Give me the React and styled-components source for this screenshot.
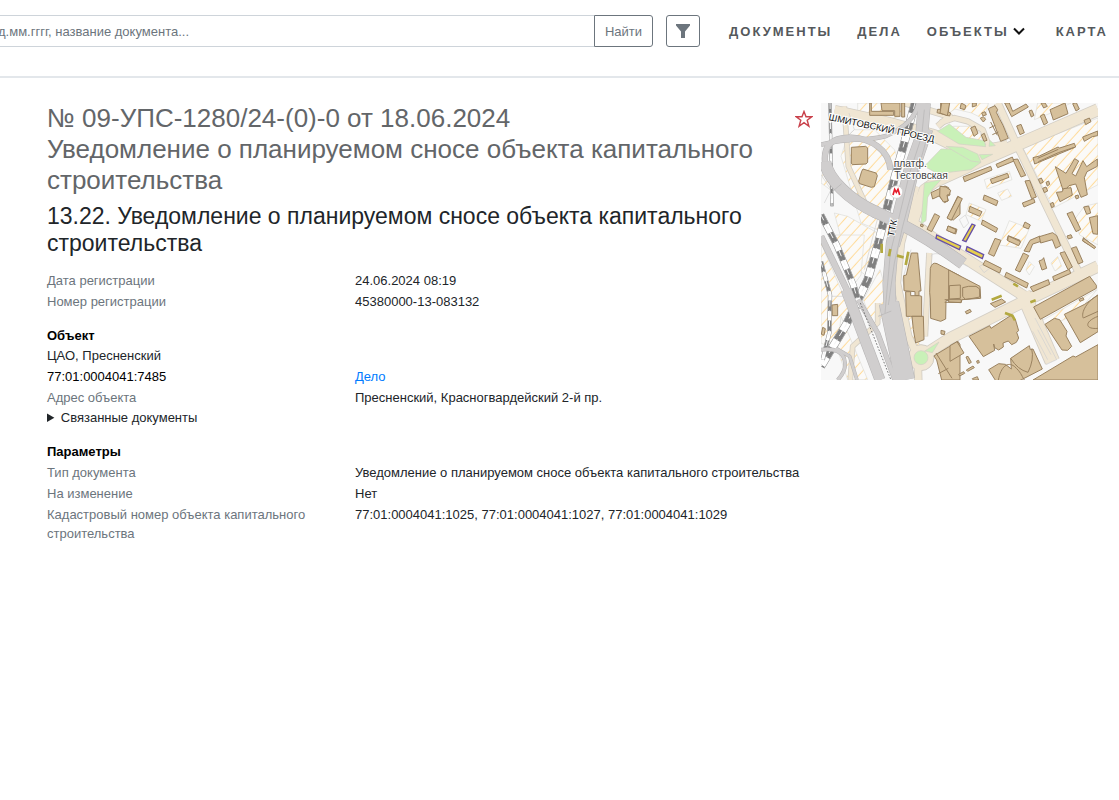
import { useState } from 'react';

import styled, { createGlobalStyle, css } from 'styled-components';

const GlobalStyle = createGlobalStyle`
  * {
    box-sizing: border-box;
  }

  body {
    margin: 0;
    background-color: #fff;
    color: #212529;
    font-family: "Liberation Sans", Arial, sans-serif;
    font-size: 13px;
    line-height: 19px;
    overflow-x: hidden;
  }
`;

const HeaderStyled = styled.header`
  display: flex;
  align-items: flex-start;
  padding: 15px 11px 29px 0;
  border-bottom: 2px solid #e3e7eb;
`;

const SearchForm = styled.form`
  display: flex;
  flex: 1;
  margin-left: -12px;
`;

const SearchInput = styled.input`
  flex: 1;
  min-width: 0;
  height: 32px;
  padding: 0 9px;
  border: 1px solid #ced4da;
  border-right: none;
  border-radius: 3px 0 0 3px;
  font: inherit;
  color: #495057;

  &::placeholder {
    color: #6c757d;
    opacity: 1;
  }
`;

const Button = styled.button`
  display: flex;
  align-items: center;
  justify-content: center;
  height: 32px;
  padding: 0 10px;
  border: 1px solid #6c757d;
  border-radius: 3px;
  background-color: transparent;
  color: #6c757d;
  font: inherit;
  cursor: pointer;
`;

const SearchBtn = styled(Button)`
  border-radius: 0 3px 3px 0;
`;

const FilterBtn = styled(Button)`
  width: 34px;
  margin-left: 13px;
  padding: 0;
`;

const Nav = styled.nav`
  display: flex;
  align-items: center;
  gap: 25px;
  height: 32px;
  margin-left: 29px;
`;

const navItem = css`
  color: #55595c;
  font-size: 13px;
  font-weight: 700;
  letter-spacing: 2px;
  text-transform: uppercase;
`;

const NavLink = styled.a`
  ${navItem}
  text-decoration: none;
`;

const NavDropdown = styled.button`
  ${navItem}
  display: flex;
  align-items: center;
  gap: 4px;
  margin-right: 6px;
  padding: 0;
  border: none;
  background: none;
  font-family: inherit;
  cursor: pointer;
`;

const Main = styled.main`
  display: flex;
  align-items: flex-start;
  gap: 8px;
  padding: 25px 21px 24px 47px;
`;

const Content = styled.article`
  flex: 1;
  min-width: 0;
`;

const Heading = styled.div`
  display: flex;
  align-items: flex-start;
  justify-content: space-between;
  gap: 24px;
`;

const Title = styled.h1`
  margin: 0 0 7px;
  color: #636669;
  font-size: 26px;
  font-weight: 400;
  line-height: 31px;
`;

const Subtitle = styled.h2`
  margin: 0 0 13px;
  padding-right: 42px;
  font-size: 23px;
  font-weight: 400;
  line-height: 27px;
`;

const StarBtn = styled.button`
  display: flex;
  margin-top: 7px;
  padding: 0;
  border: none;
  background: none;
  cursor: pointer;
`;

const Section = styled.section`
  margin-bottom: 13px;
`;

const SectionTitle = styled.h3`
  margin: 0;
  color: #000;
  font-size: 13px;
  font-weight: 700;
  line-height: 21px;
`;

const Line = styled.p`
  margin: 0;
  line-height: 20px;
`;

const List = styled.dl`
  margin: 0;
`;

const Row = styled.div`
  display: grid;
  grid-template-columns: 308px 1fr;
  padding: 1px 0;
`;

const Term = styled.dt`
  padding-right: 30px;
  color: ${({ $dark }) => $dark ? '#000' : '#6c757d'};
`;

const Value = styled.dd`
  margin: 0;
`;

const CaseLink = styled.a`
  color: #007bff;
  text-decoration: none;
`;

const Related = styled.details`
  line-height: 20px;

  summary {
    cursor: pointer;
  }
`;

const MapStyled = styled.svg`
  display: block;
  flex: none;
  width: 277px;
  height: 277px;
`;

const FunnelIcon = () => (
  <svg width="16" height="16" viewBox="0 0 16 16" aria-hidden="true">
    <path d="M1 1h14v1.500L10 8.500V15H6V8.500L1 2.500z" fill="#6c757d" />
  </svg>
);

const ChevronIcon = () => (
  <svg width="12" height="12" viewBox="0 0 12 12" aria-hidden="true">
    <path d="M1 3.500l5 5 5-5" fill="none" stroke="#111" strokeWidth="2" />
  </svg>
);

const StarIcon = ({ filled }) => (
  <svg width="18" height="18" viewBox="0 0 18 18" aria-hidden="true">
    <path
      d="M9 1.500l2 5.300h5.700l-4.500 3.500 1.700 5.900L9 12.700l-4.900 3.500 1.700-5.900L1.300 6.800H7z"
      fill={filled ? '#c9414b' : 'none'}
      stroke="#c9414b"
      strokeWidth="1.400"
    />
  </svg>
);

const hatched = [
  'M110 0h140l-10 40-60 14-70-24z',
  'M100 80l60 0 60 60 20 50-70 190-50-20-60-200 20-60z',
  'M8 190l20 10v60l-28-20z',
  'M40 330l40 10 90 50-30 130-60-40z',
  'M0 420l60 140 40 60-80 110-20-10z',
  'M30 396h100l-10 120-30 40z',
  'M60 640l80 190h-60l-30-90z',
  'M177 500l30 100-20 40-30 30-30-80z',
  'M372 0h130l-10 50-40-20-50-12-30 20z',
  'M377 90l20-20 60 0 20 20 10 30-50-8z',
  'M605 133L831 45v200L697 315z',
  'M650 0h100l-60 30-50 20z',
  'M490 230l75-25 8 25-75 28z',
  'M445 300l50 20-15 35-45-20z',
  'M530 270l30-12 12 22-30 12z',
  'M565 353l60 23-25 60-65-10z',
  'M760 350l30-40 41-10v126l-55-30z',
  'M650 660l178-100-60 70-100 50z',
  'M260 640l20 0 20 110-25-20z',
  'M625 476l15 15-15 25-10-15z',
  'M690 480l20-20 12 30-20 14z',
];

const greens = [
  'M310 190l50-52 60 0 60 40-30 22-100 12z',
  'M310 240l50-10-25 28-15 25-5 70-15 10z',
  'M350 85l35-22 50 40 55 10 4 18-80-8z',
  'M375 130l50 3 45 20 10 25-30-4z',
  'M475 155l40-1-32 16z',
  'M507 112l16 16-19 2z',
  'M310 745l44-28-20 32-18-4z',
];

// [path, width], drawn first as a casing and then as a fill
const streets = [
  ['M40 25L200 60 330 95 480 145 560 130', 34],
  ['M831 20L587 126 490 168 350 232', 34],
  ['M530 0L587 126 600 150 772 506', 20],
  ['M357 60L400 45 440 55 485 80 500 120 520 135', 14],
  ['M340 96L400 108 460 145', 14],
  ['M340 110L380 130 440 170 465 195', 12],
  ['M350 232L310 260 295 300 275 360 330 400 620 586', 30],
  ['M606 570L694 775', 42],
  ['M831 490L620 590 387 706 300 762', 32],
  ['M325 450L312 700', 14],
  ['M285 250L240 420 228 540 262 700 290 760 292 831', 20],
  ['M70 10L82 190 130 295', 12],
  ['M250 0L385 40 350 70', 16],
  ['M170 600L170 660 95 730 88 831', 12],
];

const motorways = [
  ['M292 0C284 50 240 80 192 100 C140 116 100 100 0 125', 11],
  ['M208 200C205 140 150 106 90 104C30 102 8 130 12 176', 16],
  ['M12 176C20 225 80 290 170 330', 34],
  ['M160 325C240 360 330 410 426 482', 34],
  ['M310 0L302 100 270 190 235 330 214 420 204 540 208 640', 36],
  ['M326 80L285 200 250 350 226 430', 18],
  ['M204 600L252 831', 58],
  ['M0 400L80 566', 17],
  ['M75 560L177 831', 30],
  ['M112 590L170 690 222 831', 13],
  ['M0 740C40 735 70 745 72 780C74 800 65 815 50 831', 9],
  ['M45 736L86 760 108 831', 8],
];

const rails = [
  ['M282 0L258 90 222 220 172 420 140 530 75 666 0 790', 22],
  ['M27 0L33 310', 7],
  ['M0 336L47 426 97 546 117 616', 17],
  ['M0 476L27 576 25 690 5 770', 10],
];

// buildings of each quarter, in that quarter's own coordinates
const buildings = [
  {
    x: -123, y: -24,
    shapes: [
      'M214 157l43-3 6 5v43l-5 5-41 2-3-5z',
      'M249 222l39 12 4 8-9 33-9 2-35-11-3-7 9-30z',
      'M269 24h5v25h67v12h-72z',
      'M303 24h57v40h-16v-17h-38z',
      'M365 24h9v42h-9z',
      'M482 24h24v28l6 2-3 9-38-10 2-10h9z',
      'M453 293l42-20 11 5 4 22-9 4 4 13-11 6-17-20-19 9z',
      'M533 304l7 4v50l-20 17-18-6z',
      'M464 356l15 8-24 46-14-7z',
      'M505 393l26 10-4 14-26-11z',
      'M423 387l7 3-2 6-7-3z',
    ],
  },
  {
    x: 357, y: -24,
    shapes: [
      'M5 24h24l-7 38-22-8z',
      'M64 24l14 8-4 12-14-4z',
      'M97 24h12v8l-12 4z',
      'M145 41l20-9 8 12-4 8 9 18 11 21 16 39-23 9z',
      'M121 70l9-5 7 8-7 8z',
      'M125 54l10-4 4 9-10 4z',
      'M92 99l13-6 9 22-12 9z',
      'M124 120l9-5 8 21-9 3z',
      'M194 24h14l10 25 40-22 7 9-50 29z',
      'M230 93l13-5 10 25-13 6z',
      'M301 63l11-6 11 26-11 7z',
      'M330 44l45-20 9 32-44 19z',
      'M398 26l11-3 9 19-10 6z',
      'M267 48l8-3 7 16-8 5z',
      'M303 24h12l7 10-11 5z',
      'M432 76l16-7 5 11-16 9z',
      'M428 126l45-18v14l-16 3-24 14z',
      'M279 188l19-5 56-27 5 3 44-14 4 11-123 51z',
      'M346 215l32 20 26-44 12 7-20 38 11 7 22-46 11 18 32-23v22l-31 16-8 18 9 51-19 8-16-40-20 5-16 19z',
      'M349 292l18-2 3-9 23-3 4 22-37 20z',
      'M295 253l9-4 6 12-9 5z',
      'M318 262l8-4 3 10-7 5z',
      'M308 280l10-4 5 12-10 5z',
      'M331 326l8-4 4 12-8 4z',
      'M405 303l9-3 3 8-8 4z',
      'M69 246l83-32 4 11-82 35z',
      'M168 208l49-22 5 12-49 20z',
      'M219 194l14-2 24 49-14 5z',
      'M151 253l51-18 5 12-51 19z',
      'M255 258l14-2 20 50-14 5z',
      'M247 324l34-13 4 11-33 14z',
      'M133 300l41 18-5 14-40-18z',
      'M90 334l36 16-7 14-33-14z',
      'M54 305l13 6-33 65-13-7z',
      'M0 274l18 2 14 10-4 13-7 1 3 18-14 3-11-18z',
      'M128 375l45 25-5 12-44-24z',
      'M24 393l24 11-4 12-24-10z',
      'M255 381l16 9-6 12-16-7z',
      'M381 356l16-6 25 53-14 7z',
      'M431 336l15-3 6 21-12 4z',
      'M448 368l25-6v56l-14-2z',
      'M381 423l12-4 4 9-12 4z',
      'M205 422l35 14-4 11-35-12z',
      'M430 428l22 18-4 4-20-12z',
    ],
  },
  {
    x: -33, y: 396,
    shapes: [
      'M304 54l19 0 10 114-6 0 0 14-12 0 0-12-33-3-1-45 8-2z',
      'M287 170h15v12h26l7 2v60h-33l-13 0z',
      'M306 244h34l2 70-25 10-7-40z',
      'M361 100q5-20 20-14l70 37v71l-43 3-1 55-15 7-30-9-1-58-2-20z',
      'M66 210l17-2v34h-16z',
      'M38 277l8 4-4 20-8-3z',
      'M384 355l60-36 6 10v106h-55l-15-60-8-12z',
      'M393 286l12 3-2 10-10-2z',
    ],
  },
  {
    x: 387, y: 396,
    shapes: [
      'M-4 105l94 49 2 36-56 4-3 9-37-2z',
      'M135 10l18 6-21 48-17-8z',
      'M175 3l37 17-6 12-33-15z',
      'M106 76l48 24-5 14-50-25z',
      'M220 54l16 8-26 49-14-6z',
      'M169 112l66 33-5 14-66-34z',
      'M241 156l54-22 4 14-50 22z',
      'M222 48l18-32 30-13 6 15-28 9-10 24z',
      'M268 5l40-12 12 9 12 30-15 8-10-26-35 10z',
      'M267 78l10-4 4-6 9 32-14 5z',
      'M308 125l50-22 4 12-50 22z',
      'M330 54l14-4 23 46-13 8z',
      'M364 40l15-5 20 46-14 6z',
      'M401 10l36 26-4 5-35-24z',
      'M251 216l168-92 20 27 0 9-168 93z',
      'M343 238l61-30 40-28v110l-53 33z',
      'M285 268l28-18 16 4 22 35-3 14 17 31-12 12-17-1z',
      'M57 304l62-32 4 8 60-39 13 12 10 34-6 5 6 17-7 13-14 7-10-11-16 6 1 12-14 9-12-7-3-11 3 19-34 19z',
      'M0 332l21-12 21 34-42 25z',
      'M116 404l30-18 20 2 18 14-2-32 56-38 3 12 8-2 28 60-68 35h-72z',
      'M249 435l120-72 8 3 67-37v106z',
      'M121 206l34-14 12 9-32 16z',
      'M46 230l14-7 4 7-14 7z',
      'M48 366l6-2 10 18-7 4z',
      'M49 405l20-12 4 5-20 11z',
      'M26 418l15-8 3 5-15 8z',
      'M67 431l15-6 4 10h-16z',
      'M80 378l6-2 2 7-6 2z',
      'M387 193l12-5 3 6-12 5z',
    ],
  },
];

const outlines = [
  'M385 548l33-2v40l-33 2z',
  'M371 590h50v8h-50',
  'M425 554l18-4h22l11 8v24l-20 4-23 3-8-9z',
  'M345 750l48 76M352 812l30-16',
  'M532 831C540 790 560 775 580 790C600 808 600 815 610 831',
  'M569 766Q590 800 621 808Q640 770 632 737',
  'M831 576C790 600 780 635 787 645L831 625M831 640C790 655 790 680 831 676',
  'M509 57l20 40M505 75l18-8M514 95l18-8',
  'M652 176l60-27 48-16M650 166l62-27',
];

const selected = [
  'M453 363l9 4-27 49-10-4z',
  'M438 431l50 24-4 12-49-24z',
  'M347 396l72 33-4 11-70-34z',
];

const fences = [
  'M0 215L30 260 10 300', 'M84 30L100 80 68 110', 'M172 338L130 500',
  'M635 685L680 770M650 680L690 755', 'M675 785l32-15-65-125',
  'M475 490l22-10 10 15-18 14zM415 350l18-14 10 24-15 15z',
  'M30 580h60v70M270 440L245 530 285 700M330 460C340 440 380 460 440 490',
];

const DistrictMap = () => (
  <MapStyled viewBox="0 0 831 831" role="img" aria-label="Карта">
    <defs>
      <pattern id="hatch" width="23" height="23" patternUnits="userSpaceOnUse" patternTransform="rotate(42)">
        <rect width="23" height="23" fill="#fbfaf8" />
        <path d="M10 0v23" stroke="#ffdc9c" strokeWidth="3" />
      </pattern>
    </defs>
    <rect width="831" height="831" fill="#f8f8f8" />
    <g fill="url(#hatch)" stroke="#dddcd8" strokeWidth="2">
      {hatched.map((d) => <path key={d} d={d} />)}
    </g>
    <g fill="none" stroke="#d3cec5" strokeLinejoin="round">
      {streets.map(([d, width]) => <path key={d} d={d} strokeWidth={width + 5} />)}
    </g>
    <circle cx="300" cy="764" r="39" fill="#f0e6d3" stroke="#d3cec5" strokeWidth="3" />
    <g fill="none" stroke="#f0e6d3" strokeLinejoin="round">
      {streets.map(([d, width]) => <path key={d} d={d} strokeWidth={width} />)}
    </g>
    <g fill="#c9f1b8" stroke="#d3cec5" strokeWidth="2">
      {greens.map((d) => <path key={d} d={d} />)}
      <circle cx="300" cy="764" r="21" />
    </g>
    <g fill="none" stroke="#d0d0d0" strokeWidth="2">
      {fences.map((d) => <path key={d} d={d} />)}
    </g>
    <g fill="none">
      {rails.map(([d, width]) => (
        <g key={d}>
          <path d={d} stroke="#8a8a8a" strokeWidth={width + 3} />
          <path d={d} stroke="#fff" strokeWidth={width} />
          <path d={d} stroke="#808080" strokeWidth={width} strokeDasharray="32 28" />
          <path d={d} stroke="#f4f4f4" strokeWidth="3" strokeDasharray="18 12" />
        </g>
      ))}
    </g>
    <g fill="none" stroke="#b5b3b3" strokeLinejoin="round">
      {motorways.map(([d, width]) => <path key={d} d={d} strokeWidth={width + 3} />)}
    </g>
    <g fill="none" stroke="#d0cece" strokeLinejoin="round">
      {motorways.map(([d, width]) => <path key={d} d={d} strokeWidth={width} />)}
    </g>
    <g fill="none" stroke="#b5b3b3" strokeWidth="2">
      <path d="M310 20L302 100 266 210 230 360 208 450 192 630M322 90L285 220 245 370 220 480 202 606" />
      <path d="M34 266l28-24M171 640l40-16" />
    </g>
    <path d="M118 600L210 831" fill="none" stroke="#777" strokeWidth="3" strokeDasharray="5 5" />
    {buildings.map(({ x, y, shapes }) => (
      <g key={`${x} ${y}`} transform={`translate(${x} ${y})`} fill="#d6c09b" stroke="#9a8260" strokeWidth="3">
        {shapes.map((d) => <path key={d} d={d} />)}
      </g>
    ))}
    <g fill="none" stroke="#9a8260" strokeWidth="3">
      {outlines.map((d) => <path key={d} d={d} />)}
    </g>
    <g fill="#e6cf4e" stroke="#6650a8" strokeWidth="4">
      {selected.map((d) => <path key={d} d={d} />)}
    </g>
    <path
      d="M182 422v28M208 438l-4 22M228 458l20 5M262 446l-8 40M512 590l30-12M552 630l22 8 8 14M577 542l14 8M628 598l16-6"
      fill="none"
      stroke="#b3a940"
      strokeWidth="8"
    />
    <g fill="#111" stroke="#fff" strokeWidth="6" paintOrder="stroke" fontSize="28">
      <text x="22" y="51" transform="rotate(12 22 51)">ШМИТОВСКИЙ ПРОЕЗД</text>
      <text x="218" y="402" transform="rotate(-78 218 402)">ТТК</text>
      <g fill="#444" fontSize="31">
        <text x="218" y="192">платф.</text>
        <text x="220" y="228">Тестовская</text>
      </g>
    </g>
    <circle cx="226" cy="267" r="19" fill="#fff" stroke="#c8c8c8" strokeWidth="2" />
    <path d="M216 276l5-17 5 9 5-9 5 17" fill="none" stroke="#e51c2b" strokeWidth="5" />
  </MapStyled>
);

const Header = () => (
  <HeaderStyled>
    <SearchForm onSubmit={(e) => e.preventDefault()}>
      <SearchInput
        type="search"
        aria-label="Поиск документов"
        placeholder="д.мм.гггг, название документа..."
      />
      <SearchBtn type="submit">Найти</SearchBtn>
    </SearchForm>
    <FilterBtn type="button" aria-label="Фильтр">
      <FunnelIcon />
    </FilterBtn>
    <Nav>
      <NavLink href="#documents">Документы</NavLink>
      <NavLink href="#cases">Дела</NavLink>
      <NavDropdown type="button" aria-haspopup="true">
        Объекты
        <ChevronIcon />
      </NavDropdown>
      <NavLink href="#map">Карта</NavLink>
    </Nav>
  </HeaderStyled>
);

const Field = ({ name, dark, children }) => (
  <Row>
    <Term $dark={dark}>{name}</Term>
    <Value>{children}</Value>
  </Row>
);

const App = () => {

  const [favorite, setFavorite] = useState(false);

  return (
    <>
      <GlobalStyle />
      <Header />
      <Main>
        <Content>
          <Heading>
            <Title>
              № 09-УПС-1280/24-(0)-0 от 18.06.2024
              <br />
              Уведомление о планируемом сносе объекта капитального строительства
            </Title>
            <StarBtn
              type="button"
              aria-label="В избранное"
              aria-pressed={favorite}
              onClick={() => setFavorite(!favorite)}
            >
              <StarIcon filled={favorite} />
            </StarBtn>
          </Heading>
          <Subtitle>13.22. Уведомление о планируемом сносе объекта капитального строительства</Subtitle>

          <Section>
            <List>
              <Field name="Дата регистрации">24.06.2024 08:19</Field>
              <Field name="Номер регистрации">45380000-13-083132</Field>
            </List>
          </Section>

          <Section>
            <SectionTitle>Объект</SectionTitle>
            <Line>ЦАО, Пресненский</Line>
            <List>
              <Field name="77:01:0004041:7485" dark>
                <CaseLink href="#case">Дело</CaseLink>
              </Field>
              <Field name="Адрес объекта">Пресненский, Красногвардейский 2-й пр.</Field>
            </List>
            <Related>
              <summary>Связанные документы</summary>
            </Related>
          </Section>

          <Section>
            <SectionTitle>Параметры</SectionTitle>
            <List>
              <Field name="Тип документа">Уведомление о планируемом сносе объекта капитального строительства</Field>
              <Field name="На изменение">Нет</Field>
              <Field name="Кадастровый номер объекта капитального строительства">
                77:01:0004041:1025, 77:01:0004041:1027, 77:01:0004041:1029
              </Field>
            </List>
          </Section>
        </Content>
        <DistrictMap />
      </Main>
    </>
  );
};

export default App;
